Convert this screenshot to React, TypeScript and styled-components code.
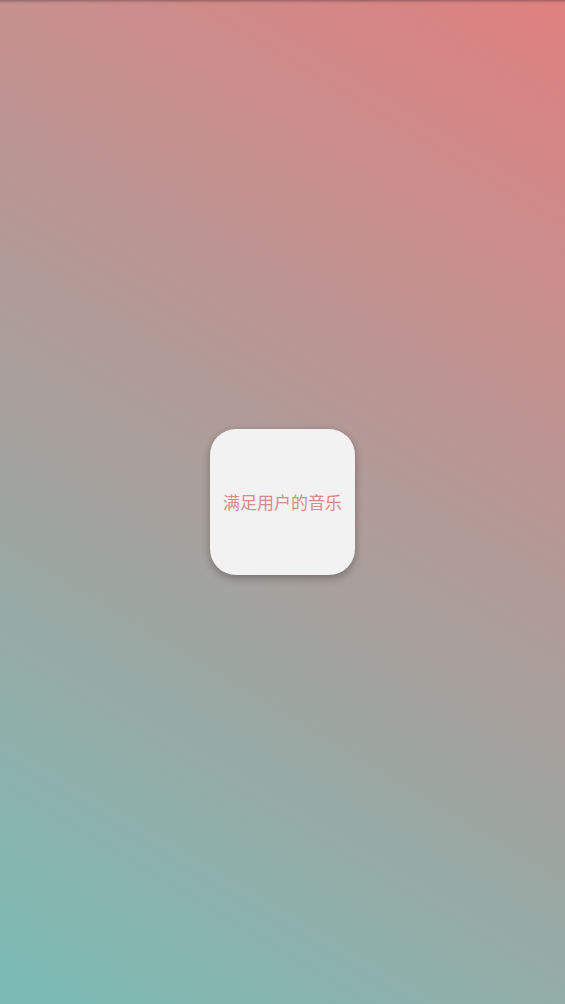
import React from 'react';
import styled, { createGlobalStyle } from 'styled-components';

const GlobalStyle = createGlobalStyle`
  html, body {
    margin: 0;
    padding: 0;
    height: 100%;
  }
  #root {
    height: 100%;
  }
`;

const Screen = styled.div`
  position: relative;
  width: 100%;
  height: 100vh;
  display: flex;
  align-items: center;
  justify-content: center;
  background: linear-gradient(31deg, #79bcb5 0%, #df8080 100%);
  overflow: hidden;
`;

// thin status-bar shade along the top edge
const TopShade = styled.div`
  position: absolute;
  top: 0;
  left: 0;
  right: 0;
  height: 3px;
  background: linear-gradient(to bottom, rgba(0, 0, 0, 0.28), rgba(0, 0, 0, 0));
`;

const Card = styled.div`
  box-sizing: border-box;
  width: 145px;
  height: 146px;
  padding-bottom: 2px;
  border-radius: 26px;
  background: #f2f2f2;
  box-shadow: 0 3px 8px rgba(0, 0, 0, 0.3);
  display: flex;
  align-items: center;
  justify-content: center;
`;

const Slogan = styled.span`
  font-family: 'Noto Sans CJK SC', 'Noto Sans', sans-serif;
  font-size: 17px;
  line-height: 1;
  color: #d68a8a;
`;

const App: React.FC = () => {
  return (
    <>
      <GlobalStyle />
      <Screen>
        <TopShade />
        <Card>
          <Slogan>满足用户的音乐</Slogan>
        </Card>
      </Screen>
    </>
  );
};

export default App;
